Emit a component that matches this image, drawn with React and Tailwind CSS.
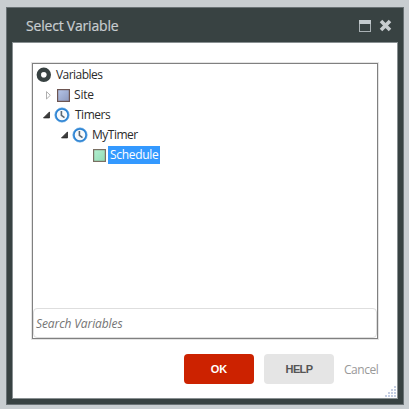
import React from 'react';

function RootIcon() {
  return (
    <svg className="block h-4 w-4 shrink-0" viewBox="0 0 16 16">
      <circle cx="7.8" cy="7.8" r="5" fill="#fff" stroke="#384242" strokeWidth="4.4" />
      <path d="M7.8 5v5.6M5 7.8h5.6" stroke="#c3cacb" strokeWidth="0.8" />
      <circle cx="7.8" cy="7.8" r="2.3" fill="#fff" />
    </svg>
  );
}

function ClockIcon() {
  return (
    <svg className="block h-4 w-4 shrink-0" viewBox="0 0 16 16">
      <circle cx="8" cy="8" r="6.3" fill="#f7f9fb" stroke="#2c83d3" strokeWidth="2" />
      <circle cx="8" cy="8" r="7.2" fill="none" stroke="#79b4e6" strokeWidth="0.6" />
      <path d="M7.4 4v4.3l3.1 2.4" fill="none" stroke="#5c6874" strokeWidth="1.6" />
    </svg>
  );
}

function SquareIcon({ green }) {
  return (
    <svg className="block h-[13px] w-[13px] shrink-0" viewBox="0 0 13 13">
      <defs>
        <linearGradient id="blueFill" x1="0" y1="0" x2="1" y2="1">
          <stop offset="0" stopColor="#b6c6ea" />
          <stop offset="1" stopColor="#8c98bd" />
        </linearGradient>
        <linearGradient id="greenFill" x1="0" y1="0" x2="1" y2="1">
          <stop offset="0" stopColor="#b4efd0" />
          <stop offset="1" stopColor="#90dcb5" />
        </linearGradient>
      </defs>
      <rect x="0.6" y="0.6" width="11.8" height="11.8" fill={green ? 'url(#greenFill)' : 'url(#blueFill)'} stroke={green ? '#796f62' : '#6d5551'} strokeWidth="1.2" />
    </svg>
  );
}

function Arrow({ open }) {
  return (
    <svg className="block h-[9px] w-[7px] shrink-0" viewBox="0 0 7 9">
      {open ? (
        <path d="M6.5 0.9v6H0.5z" fill="#3b3b3b" stroke="#262626" strokeWidth="0.8" />
      ) : (
        <path d="M1.5 0.6v7.4L5.3 4.3z" fill="#fff" stroke="#a6a6a6" strokeWidth="0.9" />
      )}
    </svg>
  );
}

export default function App() {
  return (
    <div className="h-[409px] w-[409px] overflow-hidden bg-[#c8cdd0] pl-[6px] pt-[7px] font-['Open_Sans','Noto_Sans',sans-serif]">
      <div className="flex h-[398px] w-[398px] flex-col border border-[#697174] bg-[#384242] px-[5px] pb-[5px]">
        <div className="flex h-[34px] shrink-0 items-center justify-between pl-[14px] pr-[6px] pt-px">
          <h1 className="whitespace-nowrap text-[14px] font-normal leading-5 tracking-[-0.2px] text-[#c8cdd0] [-webkit-text-stroke:0.2px_#c8cdd0]">Select Variable</h1>
          <div className="flex items-center gap-[8px]">
            <svg className="h-3 w-3" viewBox="0 0 12 12">
              <rect x="0.5" y="0.5" width="11" height="11" fill="none" stroke="#a9b1b4" />
              <path d="M0 0h12v4H0z" fill="#c3cacd" />
            </svg>
            <svg className="h-[13px] w-[13px]" viewBox="0 0 13 13">
              <path d="M2 2l9 9M11 2l-9 9" stroke="#c8cdd0" strokeWidth="3.6" />
            </svg>
          </div>
        </div>
        <div className="relative flex grow flex-col border border-[#899092] bg-white pl-[19px] pt-[20px]">
          <div className="flex h-[276px] w-[346px] flex-col border border-[#808080] shadow-[0_0_0_1px_#e4e4e4]">
            <ul className="grow pt-px text-[12px] leading-5 tracking-[-0.55px] text-[#2b2b2b]">
              <li className="flex h-5 items-center gap-[4px] pl-[3px]"><RootIcon /><span>Variables</span></li>
              <li className="flex h-5 items-center pl-[12px]"><Arrow /><span className="ml-[5px]"><SquareIcon /></span><span className="ml-[4px] tracking-[-0.2px]">Site</span></li>
              <li className="flex h-5 items-center pl-[10px]"><Arrow open /><span className="ml-[4px]"><ClockIcon /></span><span className="ml-[5px] tracking-[-0.5px]">Timers</span></li>
              <li className="flex h-5 items-center pl-[28px]"><Arrow open /><span className="ml-[4px]"><ClockIcon /></span><span className="ml-[4px] tracking-[-0.5px]">MyTimer</span></li>
              <li className="flex h-5 items-center pl-[60px]"><SquareIcon green /><span className="ml-[2px] flex h-[18px] w-[52px] items-center bg-[#3399ff] pl-[2px] tracking-[-0.32px] text-white">Schedule</span></li>
            </ul>
            <div className="flex h-[30px] shrink-0 items-center rounded-[4px] border border-[#dedede] pl-[2px] pt-px text-[12px] italic tracking-[-0.1px] text-[#757575]">Search Variables</div>
          </div>
          <div className="mt-[15px] flex h-[30px] items-center pl-[152px]">
            <button className="h-[30px] w-[70px] rounded-[4px] bg-[#cc2200] font-['Liberation_Sans',sans-serif] text-[11px] font-bold text-white">OK</button>
            <button className="ml-[10px] h-[30px] w-[70px] rounded-[4px] bg-[#e5e5e5] font-['Liberation_Sans',sans-serif] text-[11px] font-bold tracking-[-0.6px] text-[#555]">HELP</button>
            <span className="ml-[10px] pt-[2px] text-[12px] tracking-[-0.45px] text-[#999]">Cancel</span>
          </div>
          <svg className="absolute bottom-[1px] right-[1px] h-[11px] w-[11px]" viewBox="0 0 11 11" fill="#c5cee2">
            <path d="M9 0h2v2H9zM6 3h2v2H6zM9 3h2v2H9zM3 6h2v2H3zM6 6h2v2H6zM9 6h2v2H9zM0 9h2v2H0zM3 9h2v2H3zM6 9h2v2H6zM9 9h2v2H9z" />
          </svg>
        </div>
      </div>
    </div>
  );
}
